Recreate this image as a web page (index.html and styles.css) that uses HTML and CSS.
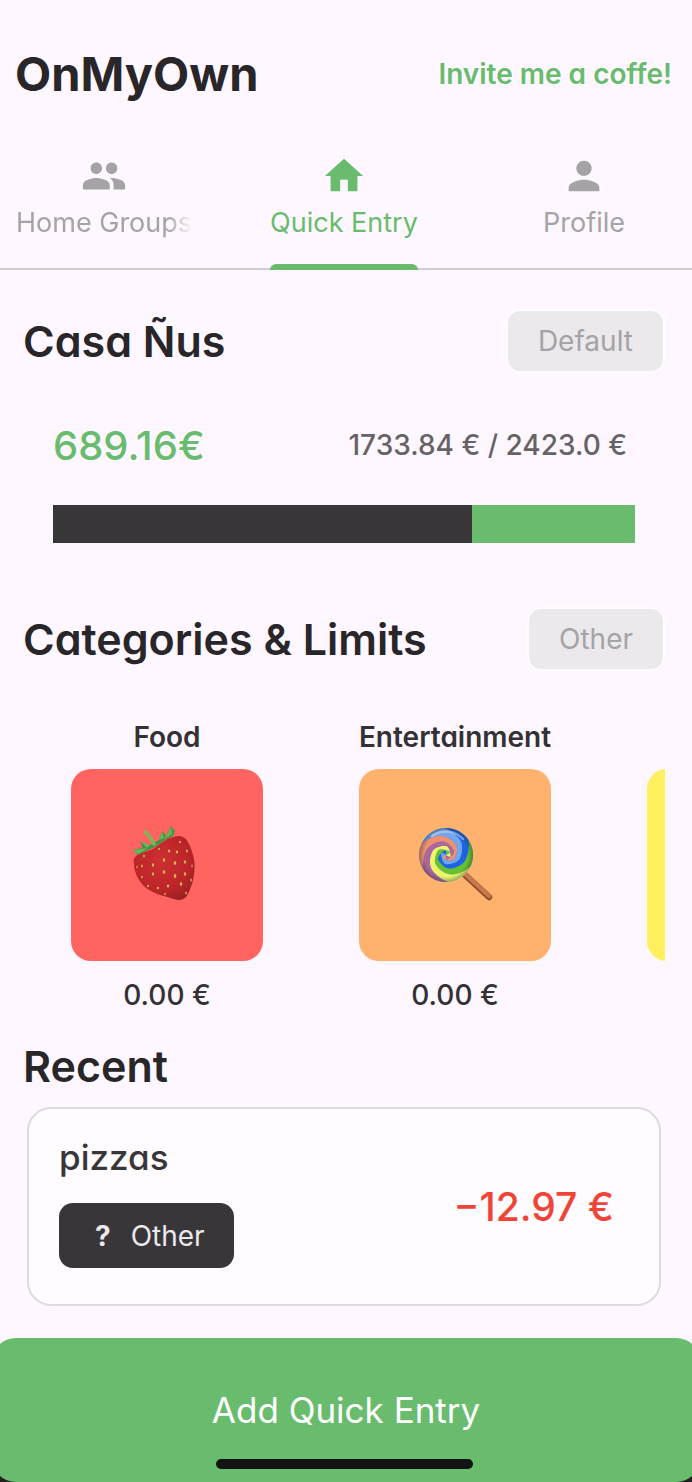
FILE: index.html
```
<!DOCTYPE html>
<html lang="en">
<head>
    <meta charset="UTF-8">
    <meta name="viewport" content="width=device-width, initial-scale=1.0">
    <title>OnMyOwn</title>
    <link rel="stylesheet" href="styles.css">
</head>
<body>
    <header class="header">
        <h1>OnMyOwn</h1>
        <a class="invite" href="#">Invite me a coffe!</a>
    </header>

    <nav class="tabs">
        <a class="tab" href="#">
            <svg class="tab-icon" viewBox="0 0 24 24"><path d="M16 11c1.66 0 2.99-1.34 2.99-3S17.66 5 16 5s-3 1.34-3 3 1.34 3 3 3zm-8 0c1.66 0 2.99-1.34 2.99-3S9.66 5 8 5 5 6.34 5 8s1.34 3 3 3zm0 2c-2.33 0-7 1.17-7 3.5V19h14v-2.5c0-2.33-4.67-3.5-7-3.5zm8 0c-.29 0-.62.02-.97.05 1.16.84 1.97 1.97 1.97 3.45V19h6v-2.5c0-2.33-4.67-3.5-7-3.5z"/></svg>
            <span class="tab-label faded">Home Groups</span>
        </a>
        <a class="tab active" href="#">
            <svg class="tab-icon" viewBox="0 0 24 24"><path d="M10 20v-6h4v6h5v-8h3L12 3 2 12h3v8z"/></svg>
            <span class="tab-label">Quick Entry</span>
        </a>
        <a class="tab" href="#">
            <svg class="tab-icon" viewBox="0 0 24 24"><path d="M12 12c2.21 0 4-1.79 4-4s-1.79-4-4-4-4 1.79-4 4 1.79 4 4 4zm0 2c-2.67 0-8 1.34-8 4v2h16v-2c0-2.66-5.33-4-8-4z"/></svg>
            <span class="tab-label">Profile</span>
        </a>
    </nav>

    <main class="content">
        <div class="section-head">
            <h2>Casa Ñus</h2>
            <button class="chip" type="button">Default</button>
        </div>
        <section class="budget">
            <div class="budget-row">
                <span class="budget-left">689.16€</span>
                <span class="budget-total">1733.84 € / 2423.0 €</span>
            </div>
            <div class="bar">
                <div class="bar-spent" style="width: 72%"></div>
            </div>
        </section>

        <div class="section-head">
            <h2>Categories &amp; Limits</h2>
            <button class="chip" type="button">Other</button>
        </div>
        <section class="categories">
            <div class="category">
                <span class="category-name">Food</span>
                <div class="tile red">
                    <svg class="emoji" viewBox="2 4 90 95">
                        <defs>
                            <radialGradient id="berry" cx="0.45" cy="0.4" r="0.65">
                                <stop offset="0" stop-color="#cf2f32"/>
                                <stop offset="0.7" stop-color="#bd2429"/>
                                <stop offset="1" stop-color="#9c2124"/>
                            </radialGradient>
                        </defs>
                        <path fill="url(#berry)" d="M16 42C20 38 29 38 36 33C43 27 51 22 59 22C67 22 71 32 74 45C76 57 73 70 68 80C65 86 60 87 54 85C44 82 34 80 26 74C18 67 14 58 14 50C13 46 14 44 16 42Z"/>
                        <g fill="#edac4e" stroke="#8f1c20" stroke-width="0.6">
                            <ellipse cx="24" cy="42" rx="1.3" ry="2"/><ellipse cx="33" cy="51" rx="1.6" ry="2.3"/>
                            <ellipse cx="44" cy="46" rx="1.8" ry="2.3"/><ellipse cx="55" cy="49" rx="1.8" ry="2.3"/>
                            <ellipse cx="44" cy="58" rx="1.8" ry="2.3"/><ellipse cx="33" cy="60" rx="1.5" ry="2.2"/>
                            <ellipse cx="22" cy="52" rx="1.2" ry="2.1"/><ellipse cx="55" cy="62" rx="1.8" ry="2.4"/>
                            <ellipse cx="61" cy="70" rx="1.7" ry="2.2"/><ellipse cx="48" cy="72" rx="1.7" ry="2"/>
                            <ellipse cx="65" cy="48" rx="1.5" ry="2.2"/><ellipse cx="72" cy="52" rx="1" ry="2"/>
                            <ellipse cx="65" cy="60" rx="1.6" ry="2.2"/><ellipse cx="71" cy="66" rx="1.1" ry="2"/>
                            <ellipse cx="28" cy="72" rx="1.3" ry="1.7"/><ellipse cx="38" cy="74" rx="1.5" ry="1.8"/>
                            <ellipse cx="66" cy="79" rx="1.2" ry="1.8"/><ellipse cx="45" cy="80" rx="1.4" ry="1.3"/>
                            <ellipse cx="22" cy="63" rx="1.2" ry="1.9"/><ellipse cx="49" cy="37" rx="1.7" ry="2"/>
                            <ellipse cx="39" cy="35" rx="1.4" ry="1.6"/><ellipse cx="60" cy="28" rx="1.5" ry="1.5"/>
                            <ellipse cx="67" cy="37" rx="1.3" ry="1.9"/><ellipse cx="57" cy="38" rx="1.6" ry="2"/>
                            <ellipse cx="17" cy="53" rx="1" ry="1.8"/>
                        </g>
                        <path fill="#3e9445" d="M12 36L23 34L20 28L31 31L39 26L42 17L46 22L51 12L54 17L56 14L53 22L45 26L35 33L28 36L18 41Z"/>
                        <path fill="#69b857" d="M12 36L22 35L28 34L18 40ZM21 28L30 31L27 34ZM39 26L42 18L44 24ZM46 22L51 13L52 20L43 26Z"/>
                        <path fill="none" stroke="#76b957" stroke-width="3.4" stroke-linecap="round" d="M25 18Q31 23 34 30"/>
                    </svg>
                </div>
                <span class="category-limit">0.00 €</span>
            </div>
            <div class="category">
                <span class="category-name">Entertainment</span>
                <div class="tile orange">
                    <svg class="emoji" viewBox="0 4 90 95">
                        <defs>
                            <path id="arm" d="M27 0C25 6 17.7 13.7 12.3 15.8C6.9 18 -2 15.8 -5.5 12.9C-9 10 -10.1 1.5 -8.9 -1.4C-7.7 -4.3 .2 -4.9 1.7 -4.7C3.2 -4.5 1.5 -1 0 0C1.6 .8 5.5 .5 4.9 -.9C4.3 -2.3 -.1 -8.8 -3.2 -8.4C-6.3 -8 -13.2 -2.8 -13.9 1.7C-14.7 6.2 -12.1 15 -7.5 18.6C-3 22.2 7.3 24.7 13.5 23.4A27 27 0 0 0 27 0Z"/>
                            <radialGradient id="candy" cx="0.5" cy="0.5" r="0.5">
                                <stop offset="0.8" stop-color="#203040" stop-opacity="0"/>
                                <stop offset="1" stop-color="#203040" stop-opacity="0.4"/>
                            </radialGradient>
                        </defs>
                        <path fill="none" stroke="#8f4a2b" stroke-width="6.4" stroke-linecap="round" d="M54 60L79 83"/>
                        <path fill="none" stroke="#c77a4c" stroke-width="4.4" stroke-linecap="round" d="M54 59L79 82"/>
                        <g transform="translate(36 41)">
                            <circle r="27" fill="#4f8fe8"/>
                            <use href="#arm" fill="#1f63e0" transform="rotate(-95)"/>
                            <use href="#arm" fill="#67c22c" transform="rotate(-35)"/>
                            <use href="#arm" fill="#eef56a" transform="rotate(25)"/>
                            <use href="#arm" fill="#b0669a" transform="rotate(85)"/>
                            <use href="#arm" fill="#f0906c" transform="rotate(145)"/>
                            <use href="#arm" fill="#6fa6ee" transform="rotate(205)"/>
                            <circle r="27" fill="url(#candy)"/>
                            <path fill="none" stroke="#fff" stroke-opacity="0.4" stroke-width="2.5" stroke-linecap="round" d="M-14 -19A23.500 23.500 0 0 1 17 -16"/>
                        </g>
                    </svg>
                </div>
                <span class="category-limit">0.00 €</span>
            </div>
            <div class="category">
                <span class="category-name"></span>
                <div class="tile yellow"></div>
            </div>
        </section>

        <h2>Recent</h2>
        <article class="entry">
            <div class="entry-info">
                <h3>pizzas</h3>
                <span class="tag"><b>?</b>Other</span>
            </div>
            <span class="entry-amount">−12.97 €</span>
        </article>
    </main>

    <footer class="footer">
        <button class="add-button" type="button">Add Quick Entry</button>
        <div class="home-indicator"></div>
    </footer>
</body>
</html>
```

FILE: styles.css
```
* {
    box-sizing: border-box;
}
body {
    font-family: Inter, 'Liberation Sans', sans-serif;
    margin: 0;
    min-height: 100vh;
    display: flex;
    flex-direction: column;
    background-color: #fef7ff;
    color: #29262a;
    overflow-x: hidden;
}
h1, h2, h3 {
    margin: 0;
}
/* single-storey a */
h1, h2, h3, .invite, .category-name {
    font-feature-settings: "cv11";
}
a {
    text-decoration: none;
}
button {
    font-family: inherit;
    cursor: pointer;
}
.header {
    display: flex;
    justify-content: space-between;
    align-items: center;
    padding: 44px 20px 0 15px;
}
h1 {
    font-size: 47px;
    line-height: 60px;
    font-weight: 700;
}
.invite {
    font-size: 28px;
    font-weight: 600;
    color: #69bc6e;
}
.tabs {
    display: grid;
    grid-template-columns: repeat(3, minmax(0, 1fr));
    column-gap: 32px;
    margin-top: 49px;
    padding-right: 4px;
    border-bottom: 2px solid #d3cad6;
}
.tab {
    display: flex;
    flex-direction: column;
    align-items: center;
    padding: 0 16px;
    color: #a6a3a6;
}
.tab-icon {
    width: 46px;
    height: 46px;
    fill: currentColor;
}
.tab-label {
    max-width: 100%;
    height: 71px;
    margin-bottom: -2px;
    padding-top: 8px;
    font-size: 27px;
    line-height: 32px;
    white-space: nowrap;
    overflow: hidden;
}
.faded {
    -webkit-mask-image: linear-gradient(to right, #000 86%, transparent);
    mask-image: linear-gradient(to right, #000 86%, transparent);
}
.active {
    color: #69bc6e;
}
.active .tab-label {
    position: relative;
}
.active .tab-label::after {
    content: "";
    position: absolute;
    left: 0;
    right: 0;
    bottom: 0;
    height: 6px;
    border-radius: 6px 6px 0 0;
    background-color: #69bc6e;
}
.content {
    padding: 39px 27px 0 23px;
}
h2 {
    font-size: 43px;
    line-height: 60px;
    font-weight: 600;
}
.section-head {
    display: flex;
    justify-content: space-between;
    align-items: center;
}
.chip {
    height: 64px;
    padding: 0 30px;
    border: 2px solid #fffcff;
    border-radius: 14px;
    background-color: #ebe9ec;
    color: #a6a3a6;
    font-size: 28px;
}
.budget {
    padding: 42px 30px 64px;
}
.budget-row {
    display: flex;
    justify-content: space-between;
    align-items: center;
    height: 60px;
    padding-right: 8px;
}
.budget-left {
    font-size: 40px;
    font-weight: 500;
    color: #69bc6e;
}
.budget-total {
    font-size: 28px;
    font-weight: 500;
    color: #666366;
}
.bar {
    height: 38px;
    margin-top: 30px;
    background-color: #69bc6e;
}
.bar-spent {
    height: 100%;
    background-color: #39363a;
}
.categories {
    display: flex;
    margin-top: 46px;
    overflow: hidden;
}
.category {
    flex: 0 0 288px;
    display: flex;
    flex-direction: column;
    align-items: center;
}
.category-name, .category-limit {
    height: 40px;
    font-size: 28px;
    line-height: 40px;
    color: #343135;
}
.category-name {
    font-weight: 600;
}
.category-limit {
    font-weight: 500;
    margin-top: 14px;
}
.tile {
    display: flex;
    justify-content: center;
    align-items: center;
    width: 192px;
    height: 192px;
    margin-top: 12px;
    border-radius: 20px;
}
.red {
    background-color: #ff6460;
}
.orange {
    background-color: #ffb26e;
}
.yellow {
    background-color: #fff060;
}
.emoji {
    width: 90px;
    height: 95px;
}
.categories + h2 {
    margin-top: 21px;
}
.entry {
    display: flex;
    justify-content: space-between;
    align-items: center;
    margin: 11px 4px 30px;
    padding: 20px 45px 20px 30px;
    border: 2px solid #dedae0;
    border-radius: 24px;
    background-color: #fffcff;
}
.entry-info {
    padding-bottom: 16px;
}
h3 {
    font-size: 35px;
    line-height: 56px;
    font-weight: 500;
    color: #39363a;
}
.tag {
    display: flex;
    align-items: center;
    gap: 20px;
    height: 65px;
    margin-top: 18px;
    padding: 0 29px 0 36px;
    border-radius: 14px;
    background-color: #39363a;
    color: #ebe9ec;
    font-size: 28px;
}
.entry-amount {
    font-size: 39px;
    font-weight: 500;
    color: #f04438;
}
.footer {
    position: relative;
    margin-top: auto;
    overflow: hidden;
    background: linear-gradient(#fef7ff 50%, #222023 50%);
}
.add-button {
    display: block;
    width: calc(100% + 16px);
    height: 144px;
    margin: 0 -8px;
    padding: 0;
    border: none;
    border-radius: 24px;
    background-color: #69bc6e;
    color: #fff;
    font-size: 35px;
}
.home-indicator {
    position: absolute;
    left: 50%;
    bottom: 13px;
    width: 257px;
    height: 10px;
    margin-left: -130px;
    border-radius: 5px;
    background-color: #131313;
}
```
